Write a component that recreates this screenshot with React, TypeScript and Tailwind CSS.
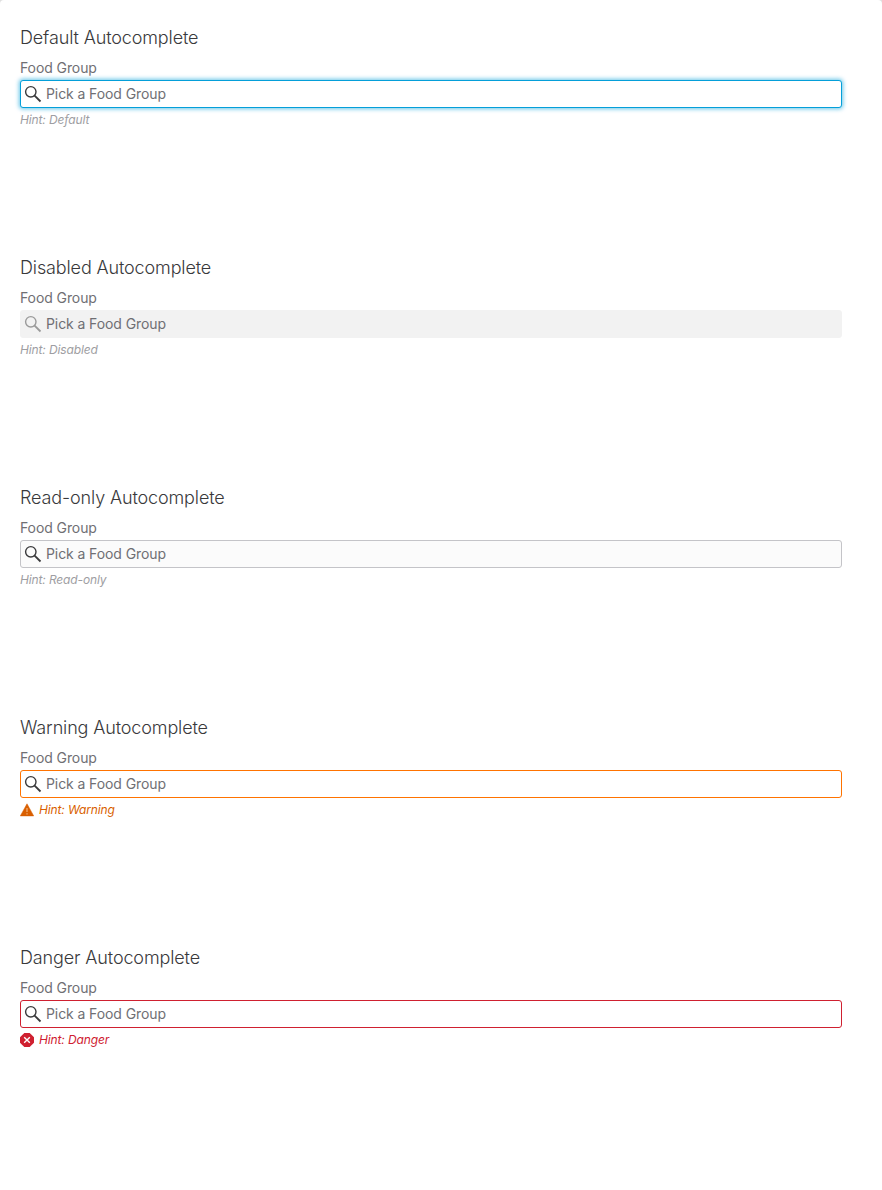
type Status = "default" | "disabled" | "readonly" | "warning" | "danger";

interface Field {
  title: string;
  hint: string;
  status: Status;
}

const fields: Field[] = [
  { title: "Default", hint: "Default", status: "default" },
  { title: "Disabled", hint: "Disabled", status: "disabled" },
  { title: "Read-only", hint: "Read-only", status: "readonly" },
  { title: "Warning", hint: "Warning", status: "warning" },
  { title: "Danger", hint: "Danger", status: "danger" },
];

const boxStyles: Record<Status, string> = {
  default: "border-[#049fd9] bg-white shadow-[0_0_4px_1px_rgba(4,159,217,0.6)]",
  disabled: "border-[#f2f2f2] bg-[#f2f2f2]",
  readonly: "border-[#c4c4c8] bg-[#fbfbfb]",
  warning: "border-[#ff7300] bg-white",
  danger: "border-[#cf2030] bg-white",
};

const hintStyles: Record<Status, string> = {
  default: "text-[#9e9ea2]",
  disabled: "text-[#9e9ea2]",
  readonly: "text-[#9e9ea2]",
  warning: "text-[#d95f00]",
  danger: "text-[#cf2030]",
};

function SearchIcon({ className }: { className: string }) {
  return (
    <svg className={className} width="18" height="18" viewBox="0 0 18 18" fill="none" stroke="currentColor">
      <circle cx="6.8" cy="6.8" r="5.2" strokeWidth="1.4" />
      <path d="M10.6 10.6L16.5 16.5" strokeWidth="1.8" />
    </svg>
  );
}

function WarningIcon() {
  return (
    <svg width="14" height="14" viewBox="0 0 14 14">
      <path d="M7 0.8L13.7 12.9H0.3Z" fill="#d95f00" stroke="#d95f00" strokeWidth="0.5" strokeLinejoin="round" />
      <path d="M7 5V9M7 10.2V11.4" stroke="#f4b888" strokeWidth="1.1" />
    </svg>
  );
}

function DangerIcon() {
  return (
    <svg width="14" height="14" viewBox="0 0 14 14">
      <path d="M4.3 0H9.7L14 4.3V9.7L9.7 14H4.3L0 9.7V4.3Z" fill="#cf2030" />
      <path d="M4.2 4.2L9.8 9.8M9.8 4.2L4.2 9.8" stroke="#fff" strokeWidth="1.4" />
    </svg>
  );
}

function Autocomplete({ title, hint, status }: Field) {
  return (
    <section className="h-[230px]">
      <h2 className="h-[30px] text-[18px] leading-[24px] font-light tracking-[-0.13px] text-[#39393b]">
        {title} Autocomplete
      </h2>
      <div className="h-[24px] text-[14px] leading-[16px] tracking-[-0.09px] text-[#6f6f74]">
        <span className="block pt-[4px]">Food Group</span>
      </div>
      <div className={`flex h-[28px] items-center rounded-[3px] border pl-[3px] ${boxStyles[status]}`}>
        <SearchIcon className={status === "disabled" ? "text-[#9a9a9a]" : "text-[#39393b]"} />
        <span className="ml-[4px] text-[14px] leading-[20px] tracking-[-0.09px] text-[#6f6f74]">Pick a Food Group</span>
      </div>
      <div
        className={`flex h-[24px] items-center gap-[5px] text-[12px] leading-[16px] tracking-[-0.13px] italic ${hintStyles[status]}`}
      >
        {status === "warning" && <WarningIcon />}
        {status === "danger" && <DangerIcon />}
        <span>Hint: {hint}</span>
      </div>
    </section>
  );
}

export default function App() {
  return (
    <div className="h-[1190px] overflow-hidden bg-[#dfdfdf]">
      <main className="h-full rounded-t-[4px] bg-white pt-[26px] pr-[40px] pl-[20px] font-['Inter','Liberation_Sans',sans-serif]">
        {fields.map((field) => (
          <Autocomplete key={field.status} {...field} />
        ))}
      </main>
    </div>
  );
}
